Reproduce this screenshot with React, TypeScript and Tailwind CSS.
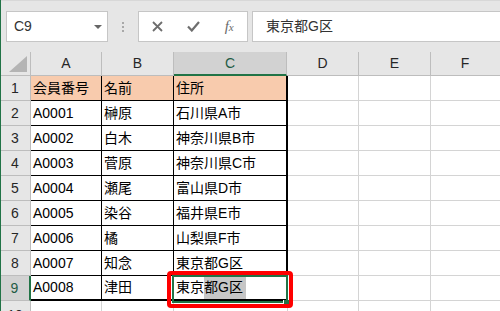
import React from "react";

const rows: { a: string; b: string; c: string }[] = [
  { a: "会員番号", b: "名前", c: "住所" },
  { a: "A0001", b: "榊原", c: "石川県A市" },
  { a: "A0002", b: "白木", c: "神奈川県B市" },
  { a: "A0003", b: "菅原", c: "神奈川県C市" },
  { a: "A0004", b: "瀬尾", c: "富山県D市" },
  { a: "A0005", b: "染谷", c: "福井県E市" },
  { a: "A0006", b: "橘", c: "山梨県F市" },
  { a: "A0007", b: "知念", c: "東京都G区" },
  { a: "A0008", b: "津田", c: "東京都G区" },
];

const font = { fontFamily: '"Liberation Sans", "Noto Sans CJK JP", sans-serif' };

export default function App() {
  return (
    <div
      className="relative w-[500px] h-[311px] overflow-hidden bg-white text-[14px] text-black"
      style={font}
    >
      {/* toolbar */}
      <div className="h-[52px] bg-[#e6e6e6] border-t border-[#d8d8d8] flex items-start pt-[10px] pl-[6px]">
        <div className="w-[102px] h-[31px] bg-white border border-[#c6c6c6] flex items-center justify-between pl-[7px] pr-[5px] text-[#333]">
          <span>C9</span>
          <div className="w-0 h-0 border-l-[4px] border-r-[4px] border-t-[4px] border-l-transparent border-r-transparent border-t-[#666]" />
        </div>
        <div className="w-[30px] h-[31px] flex flex-col items-center justify-center gap-[2px]">
          <div className="w-[2px] h-[2px] bg-[#a8a8a8]" />
          <div className="w-[2px] h-[2px] bg-[#a8a8a8]" />
          <div className="w-[2px] h-[2px] bg-[#a8a8a8]" />
        </div>
        <div className="w-[110px] h-[31px] bg-white border border-[#c6c6c6] flex items-center">
          <div className="w-[37px] flex justify-center pl-[1px]">
            <svg width="11" height="11" viewBox="0 0 11 11">
              <path d="M1 1 L10 10 M10 1 L1 10" stroke="#6e6e6e" strokeWidth="1.8" fill="none" />
            </svg>
          </div>
          <div className="w-[36px] flex justify-center">
            <svg width="13" height="11" viewBox="0 0 13 11">
              <path d="M1 5.5 L4.8 9.5 L12 1" stroke="#6e6e6e" strokeWidth="2.2" fill="none" />
            </svg>
          </div>
          <div className="w-[36px] flex justify-center">
            <span
              className="italic text-[#6a6a6a] text-[15px] leading-none"
              style={{ fontFamily: '"Liberation Serif", serif' }}
            >
              f<span className="text-[11px]">x</span>
            </span>
          </div>
        </div>
        <div className="ml-[4px] flex-1 h-[31px] bg-white border border-[#c6c6c6] border-r-0 flex items-center pl-[13px] text-[#333]">
          東京都G区
        </div>
      </div>

      {/* column header row */}
      <div className="flex h-[24px] bg-[#e6e6e6] border-b border-[#bdbdbd]">
        <div className="w-[31px] shrink-0 border-r border-[#bdbdbd] relative">
          <div className="absolute right-[3px] bottom-[3px] w-0 h-0 border-l-[18px] border-t-[16px] border-l-transparent border-t-transparent border-b-0 border-r-0" style={{ borderBottom: "0", borderRight: "0" }} />
          <svg className="absolute right-[3px] bottom-[3px]" width="18" height="16" viewBox="0 0 18 16">
            <polygon points="18,0 18,16 0,16" fill="#b4b4b4" />
          </svg>
        </div>
        <div className="w-[71px] shrink-0 border-r border-[#bdbdbd] flex items-center justify-center text-[#262626]">A</div>
        <div className="w-[72px] shrink-0 border-r border-[#bdbdbd] flex items-center justify-center text-[#262626]">B</div>
        <div className="w-[113px] shrink-0 border-r border-[#bdbdbd] bg-[#d2d2d2] border-b-2 border-b-[#217346] -mb-px flex items-center justify-center text-[#1f5c45]">C</div>
        <div className="w-[72px] shrink-0 border-r border-[#bdbdbd] flex items-center justify-center text-[#262626]">D</div>
        <div className="w-[72px] shrink-0 border-r border-[#bdbdbd] flex items-center justify-center text-[#262626]">E</div>
        <div className="flex-1 flex items-center justify-center text-[#262626] pr-[1px]">F</div>
      </div>

      {/* data rows */}
      {rows.map((r, i) => {
        const last = i === rows.length - 1;
        const head = i === 0;
        const cellBg = head ? "bg-[#f8cbad]" : "bg-white";
        return (
          <div key={i} className="flex h-[25px]">
            <div
              className={`w-[31px] shrink-0 flex items-center justify-center border-b border-[#bdbdbd] ${
                last
                  ? "bg-[#d2d2d2] border-r-2 border-r-[#217346] text-[#1f5c45]"
                  : "bg-[#e6e6e6] border-r border-r-[#bdbdbd] text-[#262626]"
              }`}
            >
              {i + 1}
            </div>
            <div
              className={`w-[71px] shrink-0 flex items-center pl-[2px] border-r border-black ${cellBg} ${
                last ? "border-b-2 border-b-black" : "border-b border-b-black"
              }`}
            >
              {r.a}
            </div>
            <div
              className={`w-[72px] shrink-0 flex items-center pl-[2px] border-r border-black ${cellBg} ${
                last ? "border-b-2 border-b-black" : "border-b border-b-black"
              }`}
            >
              {r.b}
            </div>
            <div
              className={`w-[114px] shrink-0 flex items-center pl-[2px] border-r-2 border-black ${cellBg} ${
                last ? "border-b-2 border-b-black" : "border-b border-b-black"
              }`}
            >
              {last ? (
                <span className="flex items-stretch h-full">
                  <span className="flex items-center">東京</span>
                  <span className="flex items-center bg-[#c6c6c6] pr-[3px]">都G区</span>
                </span>
              ) : (
                r.c
              )}
            </div>
            <div className="w-[71px] shrink-0 border-r border-b border-[#d4d4d4]" />
            <div className="w-[72px] shrink-0 border-r border-b border-[#d4d4d4]" />
            <div className="flex-1 border-b border-[#d4d4d4]" />
          </div>
        );
      })}

      {/* row 10 partial */}
      <div className="flex h-[25px]">
        <div className="w-[31px] shrink-0 bg-[#e6e6e6] border-r border-[#bdbdbd] flex items-start justify-center pt-[4px] text-[#262626]">
          10
        </div>
        <div className="w-[71px] shrink-0 border-r border-[#d4d4d4]" />
        <div className="w-[72px] shrink-0 border-r border-[#d4d4d4]" />
        <div className="w-[114px] shrink-0 border-r border-[#d4d4d4]" />
        <div className="w-[71px] shrink-0 border-r border-[#d4d4d4]" />
        <div className="w-[72px] shrink-0 border-r border-[#d4d4d4]" />
        <div className="flex-1" />
      </div>

      {/* window left edge */}
      <div className="absolute left-0 top-0 w-[1px] h-full bg-[#217346]" />

      {/* active cell selection */}
      <div className="absolute left-[172px] top-[275px] w-[116px] h-[28px] border-2 border-[#217346]" />
      <div className="absolute left-[283px] top-[300px] w-[6px] h-[5px] bg-[#217346] border-l border-white" />

      {/* red highlight */}
      <div className="absolute left-[167px] top-[271px] w-[126px] h-[37px] border-[4px] border-[#ff0000] rounded-[4px]" />
    </div>
  );
}
